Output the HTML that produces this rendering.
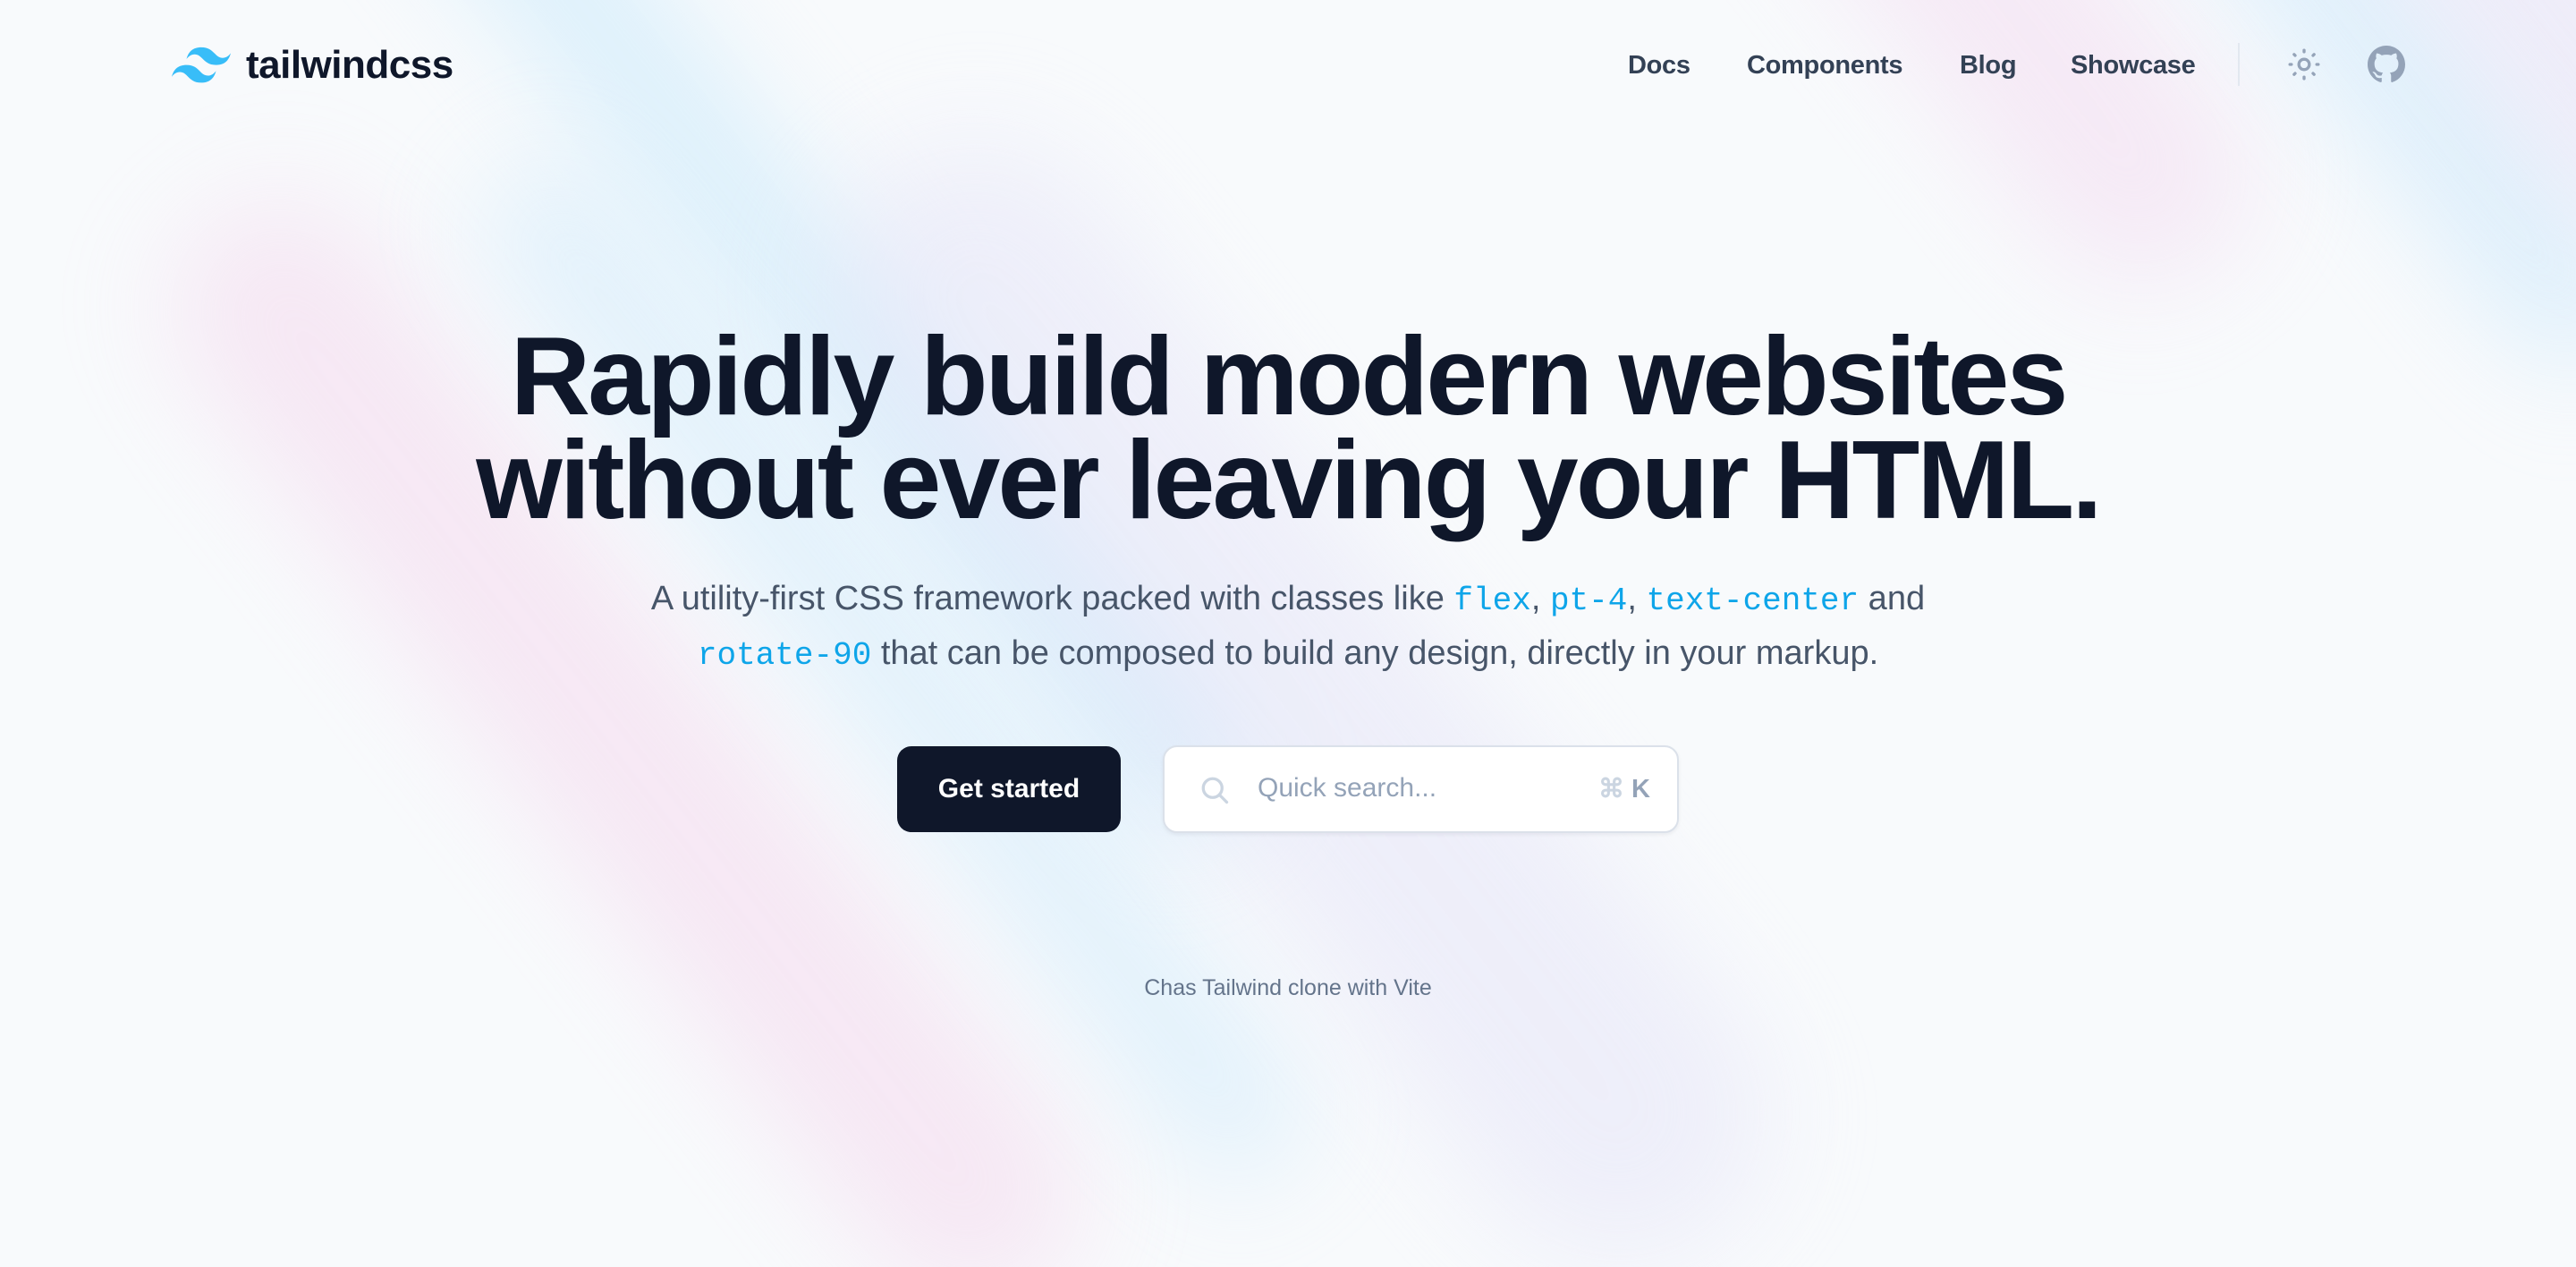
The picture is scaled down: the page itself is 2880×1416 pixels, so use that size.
<!DOCTYPE html>
<html><head><meta charset="utf-8"><style>
html,body{margin:0;padding:0;width:2880px;height:1416px;overflow:hidden;background:#f8fafc;font-family:"Liberation Sans",sans-serif;}
.bg{position:absolute;inset:0;overflow:hidden;}
.band{position:absolute;filter:blur(60px);border-radius:200px;transform:rotate(52deg);}
.abs{position:absolute;}
.nav a{position:absolute;top:57px;font-size:29px;font-weight:bold;color:#334155;text-decoration:none;letter-spacing:-0.3px;}
h1{position:absolute;left:0;width:2880px;top:363px;margin:0;text-align:center;font-size:124px;line-height:116px;font-weight:bold;color:#0f172a;letter-spacing:-3px;}
.p{position:absolute;left:0;width:2880px;top:640px;text-align:center;font-size:38px;line-height:58px;color:#475569;}
code{font-family:"Liberation Mono",monospace;color:#0ea5e9;font-size:36px;}
</style></head><body>
<div class="bg">
 <div class="band" style="left:150px;top:250px;width:1500px;height:150px;background:#bfe6fb;opacity:.5;"></div>
 <div class="band" style="left:-50px;top:720px;width:1500px;height:240px;background:#f3cde8;opacity:.4;"></div>
 <div class="band" style="left:300px;top:680px;width:1400px;height:140px;background:#c5e6fb;opacity:.45;"></div>
 <div class="band" style="left:700px;top:620px;width:1500px;height:330px;background:#e2e1f7;opacity:.45;"></div>
 <div class="band" style="left:1500px;top:-300px;width:1200px;height:240px;background:#f2d6ee;opacity:.45;"></div>
 <div class="band" style="left:1950px;top:-150px;width:1200px;height:140px;background:#c6e6fb;opacity:.55;"></div>
 <div class="band" style="left:2300px;top:-250px;width:900px;height:240px;background:#e3dcf5;opacity:.45;"></div>
</div>

<svg class="abs" style="left:192px;top:52px" width="66" height="42" viewBox="0 0 54 33"><path fill="#38bdf8" d="M27 0c-7.2 0-11.7 3.6-13.5 10.8 2.7-3.6 5.850-4.950 9.450-4.050 2.054.513 3.522 2.004 5.147 3.653C30.744 13.09 33.808 16.2 40.5 16.2c7.2 0 11.7-3.6 13.5-10.8-2.7 3.6-5.85 4.95-9.45 4.05-2.054-.513-3.522-2.004-5.147-3.653C36.756 3.11 33.692 0 27 0zM13.5 16.2C6.3 16.2 1.8 19.8 0 27c2.7-3.6 5.85-4.95 9.45-4.05 2.054.514 3.522 2.004 5.147 3.653C17.244 29.29 20.308 32.4 27 32.4c7.2 0 11.7-3.6 13.5-10.8-2.7 3.6-5.85 4.95-9.45 4.05-2.054-.513-3.522-2.004-5.147-3.653C23.256 19.31 20.192 16.2 13.5 16.2z"/></svg>
<div class="abs" style="left:275px;top:48px;font-size:44px;font-weight:bold;color:#0f172a;letter-spacing:-0.5px;">tailwindcss</div>

<div class="nav">
 <a style="left:1820px">Docs</a>
 <a style="left:1953px">Components</a>
 <a style="left:2191px">Blog</a>
 <a style="left:2315px">Showcase</a>
</div>
<div class="abs" style="left:2502px;top:48px;width:2px;height:48px;background:#e2e8f0"></div>
<svg class="abs" style="left:2556px;top:52px" width="40" height="40" viewBox="0 0 24 24" fill="none" stroke="#94a3b8" stroke-width="2" stroke-linecap="round"><circle cx="12" cy="12" r="3.5"/><path d="M12 2.5v1M12 20.5v1M21.5 12h-1M3.5 12h-1M18.7 5.3l-.7.7M6 18l-.7.7M18.7 18.7l-.7-.7M6 6l-.7-.7"/></svg>
<svg class="abs" style="left:2647px;top:51px" width="42" height="42" viewBox="0 0 16 16"><path fill="#94a3b8" d="M8 0C3.580 0 0 3.580 0 8c0 3.54 2.29 6.53 5.47 7.59.4.07.55-.17.55-.38 0-.19-.01-.82-.01-1.49-2.01.37-2.53-.49-2.690-.94-.09-.23-.48-.94-.82-1.13-.28-.15-.68-.52-.01-.53.63-.01 1.08.58 1.23.82.72 1.21 1.87.87 2.33.66.07-.52.28-.87.51-1.07-1.78-.2-3.64-.89-3.64-3.95 0-.87.31-1.59.82-2.15-.08-.2-.36-1.02.08-2.12 0 0 .67-.21 2.2.82.64-.18 1.32-.27 2-.27.68 0 1.36.09 2 .27 1.53-1.04 2.2-.82 2.2-.82.44 1.1.16 1.92.08 2.12.51.56.82 1.27.82 2.15 0 3.07-1.87 3.75-3.65 3.95.29.25.54.73.54 1.48 0 1.07-.01 1.93-.01 2.2 0 .21.15.46.55.38A8.013 8.013 0 0016 8c0-4.42-3.58-8-8-8z"/></svg>

<h1>Rapidly build modern websites<br>without ever leaving your HTML.</h1>
<div class="p">A utility-first CSS framework packed with classes like <code>flex</code>, <code>pt-4</code>, <code>text-center</code> and<br><code>rotate-90</code> that can be composed to build any design, directly in your markup.</div>

<div class="abs" style="left:1003px;top:834px;width:250px;height:96px;background:#0f172a;border-radius:16px;color:#fff;font-weight:bold;font-size:30px;line-height:96px;text-align:center;">Get started</div>
<div class="abs" style="left:1300px;top:833px;width:573px;height:94px;background:#fff;border:2px solid #dbe1ea;border-radius:16px;box-shadow:0 2px 4px rgba(15,23,42,.06);">
 <svg class="abs" style="left:38px;top:30px" width="36" height="36" viewBox="0 0 24 24" fill="none" stroke="#cbd5e1" stroke-width="2.2" stroke-linecap="round"><circle cx="10.5" cy="10.5" r="7"/><path d="M16 16l5 5"/></svg>
 <div class="abs" style="left:104px;top:29px;font-size:30px;color:#94a3b8;">Quick search...</div>
 <div class="abs" style="right:30px;top:29px;font-size:29px;font-weight:bold;color:#94a3b8;"><span style="color:#cbd5e1">⌘</span> K</div>
</div>

<div class="abs" style="left:0;width:2880px;top:1090px;text-align:center;font-size:25px;color:#64748b;">Chas Tailwind clone with Vite</div>
</body></html>
